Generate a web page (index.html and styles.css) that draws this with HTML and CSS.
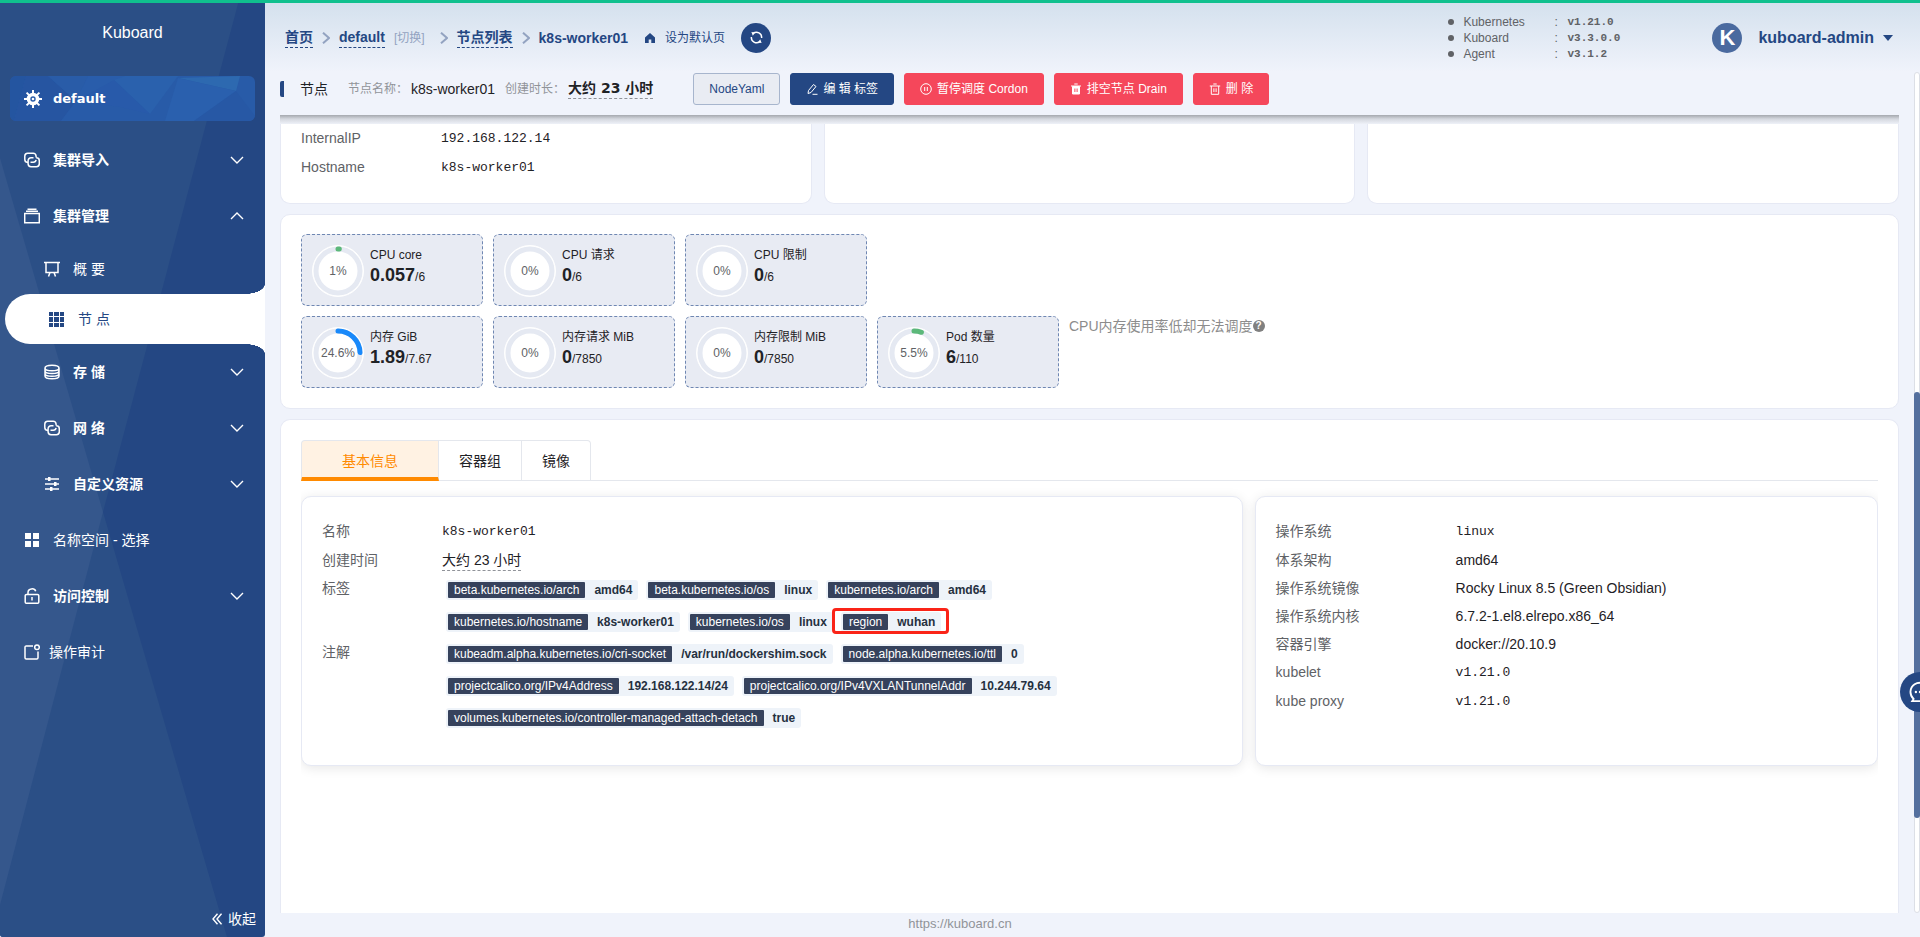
FILE: index.html
```html
<!DOCTYPE html>
<html lang="zh-CN">
<head>
<meta charset="utf-8">
<title>Kuboard</title>
<link rel="stylesheet" href="styles.css">
</head>
<body>
<svg class="defs" aria-hidden="true">
  <symbol id="i-link" viewBox="0 0 16 16"><path d="M4 10.5H3.6A2.9 2.9 0 0 1 .8 7.600V4.200A2.900 2.900 0 0 1 3.700 1.300H9.200A2.900 2.900 0 0 1 12.100 4.200V5.500M12.100 7.800A2.900 2.900 0 0 1 9.200 10.200H6.500M12.200 5.800H12.400A2.900 2.900 0 0 1 15.300 8.700V11.800A2.900 2.900 0 0 1 12.400 14.700H7A2.900 2.900 0 0 1 4.100 11.800V8.700A2.900 2.900 0 0 1 7 5.800H9.500"/></symbol>
  <symbol id="i-box" viewBox="0 0 16 16"><path d="M.7 5.500H15.300V14.700H.7ZM2 3.300H14M3.500 1.300H12.500"/></symbol>
  <symbol id="i-board" viewBox="0 0 16 16"><path d="M0 1.500H16M2 1.500V11.500H14V1.500M6 11.500L4.500 15.500M10 11.500L11.500 15.500"/></symbol>
  <symbol id="i-db" viewBox="0 0 16 16"><path d="M1 4C1 .3 15 .3 15 4S1 7.700 1 4ZM1 4V12C1 15.700 15 15.700 15 12V4M1 6.700C1 10.400 15 10.400 15 6.700M1 9.500C1 13.200 15 13.200 15 9.500"/></symbol>
  <symbol id="i-sliders" viewBox="0 0 16 16"><path d="M1 3H15M1 8H15M1 13H15"/><path class="solid" d="M4 1H6.500V5H4ZM10 6H12.500V10H10ZM6 11H8.500V15H6Z"/></symbol>
  <symbol id="i-lock" viewBox="0 0 16 16"><path d="M2.500 6.500H13.500A1.300 1.300 0 0 1 14.800 7.800V14A1.300 1.300 0 0 1 13.500 15.300H2.500A1.300 1.300 0 0 1 1.200 14V7.800A1.300 1.300 0 0 1 2.500 6.500ZM4 6.500V4.500C4 .2 10.500-.3 11.700 3.200M8 9V12.500"/></symbol>
  <symbol id="i-audit" viewBox="0 0 16 16"><path d="M9 2H2.300A1.200 1.200 0 0 0 1 3.200V13.700A1.200 1.200 0 0 0 2.200 14.900H12.800A1.200 1.200 0 0 0 14 13.700V7.500"/><circle cx="13" cy="3.200" r="2.300"/></symbol>
  <symbol id="i-down" viewBox="0 0 16 16"><path d="M2 5L8 11L14 5"/></symbol>
  <symbol id="i-up" viewBox="0 0 16 16"><path d="M2 11L8 5L14 11"/></symbol>
  <symbol id="i-sep" viewBox="0 0 8 12"><path d="M1 .7L7 6L1 11.300"/></symbol>
</svg>
<div class="app">
  <div class="progress"></div>
  <aside class="sidebar">
    <svg class="facets" viewBox="0 0 265 937" preserveAspectRatio="none" aria-hidden="true">
      <path fill="#2b4f86" d="M0 0H239L103 512L227 937H0Z"/>
      <path fill="#35578c" d="M0 158L103 512L0 905Z"/>
    </svg>
    <h1 class="brand">Kuboard</h1>
    <button class="cluster" type="button">
      <svg class="cluster-art" viewBox="0 0 245 45" preserveAspectRatio="none" aria-hidden="true">
        <path fill="#2455a0" d="M0 0H16L4 45H0Z"/>
        <path fill="#2655a1" d="M16 0H38L66 25L51 45H4Z"/>
        <path fill="#295ca8" d="M38 0H78L66 25Z"/>
        <path fill="#295dab" d="M78 0H115L66 25Z"/>
        <path fill="#2a61ad" d="M115 0H168L140 38L104 4Z"/>
        <path fill="#285aaa" d="M104 4L140 38L110 31L66 25Z"/>
        <path fill="#2d69b0" d="M168 2L230 0L226 15Z"/>
        <path fill="#2a60ae" d="M168 2L226 15L184 45H155Z"/>
        <path fill="#2758a5" d="M226 15L245 40V45H184Z"/>
      </svg>
      <svg class="gear" viewBox="0 0 18 18" aria-hidden="true"><path d="M9 0V18M0 9H18M2.600 2.600L15.400 15.400M15.400 2.600L2.600 15.400" stroke-width="2"/><circle class="gear-body" cx="9" cy="9" r="4.500" stroke-width="3.600"/><circle class="dot" cx="9" cy="9" r="1.300"/></svg>
      <span>default</span>
    </button>
    <nav class="menu">
      <a href="#" class="item group"><svg class="ico"><use href="#i-link"/></svg><span>集群导入</span><svg class="arrow"><use href="#i-down"/></svg></a>
      <a href="#" class="item group"><svg class="ico"><use href="#i-box"/></svg><span>集群管理</span><svg class="arrow"><use href="#i-up"/></svg></a>
      <a href="#" class="item sub leaf"><svg class="ico"><use href="#i-board"/></svg><span>概 要</span></a>
      <a href="#" class="item sub leaf active"><svg class="ico" viewBox="0 0 15 15"><path class="solid" d="M0 0H4V4H0ZM5 0H10V4H5ZM11 0H15V4H11ZM0 5H4V10H0ZM5 5H10V10H5ZM11 5H15V10H11ZM0 11H4V15H0ZM5 11H10V15H5ZM11 11H15V15H11Z"/></svg><span>节 点</span></a>
      <a href="#" class="item group sub"><svg class="ico"><use href="#i-db"/></svg><span>存 储</span><svg class="arrow"><use href="#i-down"/></svg></a>
      <a href="#" class="item group sub"><svg class="ico"><use href="#i-link"/></svg><span>网 络</span><svg class="arrow"><use href="#i-down"/></svg></a>
      <a href="#" class="item group sub"><svg class="ico"><use href="#i-sliders"/></svg><span>自定义资源</span><svg class="arrow"><use href="#i-down"/></svg></a>
      <a href="#" class="item"><svg class="ico" viewBox="0 0 16 16"><path class="solid" d="M1 1H7V7H1ZM9 1H15V7H9ZM1 9H7V15H1ZM9 9H15V15H9Z"/></svg><span>名称空间 - 选择</span></a>
      <a href="#" class="item group"><svg class="ico"><use href="#i-lock"/></svg><span>访问控制</span><svg class="arrow"><use href="#i-down"/></svg></a>
      <a href="#" class="item tight"><svg class="ico"><use href="#i-audit"/></svg><span>操作审计</span></a>
    </nav>
    <button class="collapse" type="button"><svg viewBox="0 0 10 12" aria-hidden="true"><path d="M5.500 .7L1 6L5.500 11.300M9.500 .7L5 6L9.500 11.300"/></svg>收起</button>
  </aside>

  <div class="main">
    <header class="topbar">
      <nav class="crumbs">
        <a href="#">首页</a>
        <svg class="sep"><use href="#i-sep"/></svg>
        <a href="#">default</a>
        <a href="#" class="switch">[切换]</a>
        <svg class="sep"><use href="#i-sep"/></svg>
        <a href="#">节点列表</a>
        <svg class="sep"><use href="#i-sep"/></svg>
        <b>k8s-worker01</b>
      </nav>
      <a href="#" class="set-home"><svg viewBox="0 0 10 10" aria-hidden="true"><path d="M5 0L10 4.500V10H6.300V6.500H3.700V10H0V4.500Z"/></svg>设为默认页</a>
      <button class="refresh" type="button" aria-label="刷新"><svg viewBox="0 0 14 14" aria-hidden="true"><path d="M3.500 2.500A5.600 5.600 0 0 1 12.500 7.500M1.500 6.500A5.600 5.600 0 0 0 10.500 11.500"/><path class="solid" d="M1.500 1L5.500 1.500L3 5ZM12.500 13L8.500 12.500L11 9Z"/></svg></button>
      <ul class="versions">
        <li><span>Kubernetes</span><i>:</i><code>v1.21.0</code></li>
        <li><span>Kuboard</span><i>:</i><code>v3.3.0.0</code></li>
        <li><span>Agent</span><i>:</i><code>v3.1.2</code></li>
      </ul>
      <button class="user" type="button"><span class="avatar">K</span>kuboard-admin<span class="caret"></span></button>
    </header>

    <div class="work">
      <div class="page">
        <div class="titlebar">
          <h2>节点</h2>
          <span class="meta">节点名称：</span><span class="val">k8s-worker01</span>
          <span class="meta">创建时长：</span><span class="age">大约 23 小时</span>
          <div class="actions">
            <button class="btn plain" type="button">NodeYaml</button>
            <button class="btn primary" type="button"><svg viewBox="0 0 12 12"><path d="M2.500 7.500L7.500 1.500L10 3.500L5 9.500L2 10.500ZM6.500 11.300H11.500"/></svg>编 辑 标签</button>
            <button class="btn danger" type="button"><svg viewBox="0 0 12 12"><path d="M6 .7A5.300 5.300 0 1 0 6 11.300A5.300 5.300 0 1 0 6 .7ZM4.700 4V8M7.300 4V8"/></svg>暂停调度 Cordon</button>
            <button class="btn danger" type="button"><svg viewBox="0 0 12 12"><path d="M1 3H11M4.300 1H7.700"/><path fill="currentColor" d="M2.500 3.500H9.500V11H2.500Z"/><path stroke="#f5475b" d="M4.900 5.500V9M7.100 5.500V9"/></svg>排空节点 Drain</button>
            <button class="btn danger" type="button"><svg viewBox="0 0 12 12"><path d="M.8 3H11.200M4.300 1H7.700M2.300 3V11.300H9.700V3M4.900 5.300V9M7.100 5.300V9"/></svg>删 除</button>
          </div>
        </div>
        <div class="fade"></div>

        <section class="trio">
          <div class="card cut">
            <dl class="kv"><dt>InternalIP</dt><dd class="mono">192.168.122.14</dd><dt>Hostname</dt><dd class="mono">k8s-worker01</dd></dl>
          </div>
          <div class="card cut"></div>
          <div class="card cut"></div>
        </section>

        <section class="card stats">
          <div class="statrow">
            <div class="stat"><div class="ring"><svg viewBox="0 0 50 50"><circle class="track" cx="25" cy="25" r="22"/><circle class="bar green" cx="25" cy="25" r="22" pathLength="100" stroke-dasharray="1 100"/></svg><span>1%</span></div><div><p>CPU core</p><p><b>0.057</b>/6</p></div></div>
            <div class="stat"><div class="ring"><svg viewBox="0 0 50 50"><circle class="track" cx="25" cy="25" r="22"/></svg><span>0%</span></div><div><p>CPU 请求</p><p><b>0</b>/6</p></div></div>
            <div class="stat"><div class="ring"><svg viewBox="0 0 50 50"><circle class="track" cx="25" cy="25" r="22"/></svg><span>0%</span></div><div><p>CPU 限制</p><p><b>0</b>/6</p></div></div>
          </div>
          <div class="statrow">
            <div class="stat"><div class="ring"><svg viewBox="0 0 50 50"><circle class="track" cx="25" cy="25" r="22"/><circle class="bar blue" cx="25" cy="25" r="22" pathLength="100" stroke-dasharray="24.6 100"/></svg><span>24.6%</span></div><div><p>内存 GiB</p><p><b>1.89</b>/7.67</p></div></div>
            <div class="stat"><div class="ring"><svg viewBox="0 0 50 50"><circle class="track" cx="25" cy="25" r="22"/></svg><span>0%</span></div><div><p>内存请求 MiB</p><p><b>0</b>/7850</p></div></div>
            <div class="stat"><div class="ring"><svg viewBox="0 0 50 50"><circle class="track" cx="25" cy="25" r="22"/></svg><span>0%</span></div><div><p>内存限制 MiB</p><p><b>0</b>/7850</p></div></div>
            <div class="stat"><div class="ring"><svg viewBox="0 0 50 50"><circle class="track" cx="25" cy="25" r="22"/><circle class="bar green" cx="25" cy="25" r="22" pathLength="100" stroke-dasharray="5.5 100"/></svg><span>5.5%</span></div><div><p>Pod 数量</p><p><b>6</b>/110</p></div></div>
            <div class="hint">CPU内存使用率低却无法调度<span class="q">?</span></div>
          </div>
        </section>

        <section class="card detail">
          <div class="tabs" role="tablist">
            <button class="tab on" type="button" role="tab" aria-selected="true">基本信息</button>
            <button class="tab" type="button" role="tab">容器组</button>
            <button class="tab" type="button" role="tab">镜像</button>
          </div>
          <div class="panels">
            <div class="panel">
              <dl class="kv left">
                <dt>名称</dt><dd class="mono">k8s-worker01</dd>
                <dt>创建时间</dt><dd><span class="dashed">大约 23 小时</span></dd>
                <dt>标签</dt>
                <dd class="tags">
                  <span class="tag"><span>beta.kubernetes.io/arch</span><b>amd64</b></span>
                  <span class="tag"><span>beta.kubernetes.io/os</span><b>linux</b></span>
                  <span class="tag"><span>kubernetes.io/arch</span><b>amd64</b></span>
                  <span class="tag"><span>kubernetes.io/hostname</span><b>k8s-worker01</b></span>
                  <span class="tag"><span>kubernetes.io/os</span><b>linux</b></span>
                  <span class="tag marked"><span>region</span><b>wuhan</b></span>
                </dd>
                <dt>注解</dt>
                <dd class="tags">
                  <span class="tag"><span>kubeadm.alpha.kubernetes.io/cri-socket</span><b>/var/run/dockershim.sock</b></span>
                  <span class="tag"><span>node.alpha.kubernetes.io/ttl</span><b>0</b></span>
                  <span class="tag"><span>projectcalico.org/IPv4Address</span><b>192.168.122.14/24</b></span>
                  <span class="tag"><span>projectcalico.org/IPv4VXLANTunnelAddr</span><b>10.244.79.64</b></span>
                  <span class="tag"><span>volumes.kubernetes.io/controller-managed-attach-detach</span><b>true</b></span>
                </dd>
              </dl>
            </div>
            <div class="panel">
              <dl class="kv right">
                <dt>操作系统</dt><dd class="mono">linux</dd>
                <dt>体系架构</dt><dd>amd64</dd>
                <dt>操作系统镜像</dt><dd>Rocky Linux 8.5 (Green Obsidian)</dd>
                <dt>操作系统内核</dt><dd>6.7.2-1.el8.elrepo.x86_64</dd>
                <dt>容器引擎</dt><dd>docker://20.10.9</dd>
                <dt>kubelet</dt><dd class="mono">v1.21.0</dd>
                <dt>kube proxy</dt><dd class="mono">v1.21.0</dd>
              </dl>
            </div>
          </div>
        </section>
      </div>
      <div class="scroll"><div class="thumb"></div></div>
    </div>
  </div>
  <footer class="foot"><a href="#">https://kuboard.cn</a></footer>
  <button class="chat" type="button" aria-label="反馈"><svg viewBox="0 0 24 24" aria-hidden="true"><path d="M5 19.500A10 10 0 1 1 12 22H3.500Z"/><circle class="dot" cx="7.500" cy="12" r="1.300"/><circle class="dot" cx="12" cy="12" r="1.300"/><circle class="dot" cx="16.500" cy="12" r="1.300"/></svg></button>
</div>
</body>
</html>
```

FILE: styles.css
```css
:root {
  --navy: #244783;
  --bg: #f0f3fb;
  --line: #e6e9f4;
  --text: #1f2226;
  --muted: #606266;
  --soft: #909399;
}

* { box-sizing: border-box; }

body {
  margin: 0;
  background: var(--bg);
  color: var(--text);
  font: 14px/20px "Liberation Sans", "Noto Sans CJK SC", sans-serif;
}

h1, h2, p, ul, dl, dd { margin: 0; padding: 0; }
a { color: inherit; text-decoration: none; }
button { font: inherit; color: inherit; border: 0; background: none; padding: 0; cursor: pointer; }
svg { flex: none; fill: none; stroke: currentColor; }
.solid, .dot { fill: currentColor; stroke: none; }
.defs { position: absolute; width: 0; height: 0; }
.mono, code { font-family: "Liberation Mono", "Noto Sans CJK SC", monospace; }

.app {
  position: relative;
  display: grid;
  grid-template: minmax(0, 1fr) 24px / 265px minmax(0, 1fr);
  height: 100vh;
  overflow: hidden;
}

.progress {
  position: absolute;
  inset: 0 0 auto;
  height: 3px;
  background: #10c08e;
  z-index: 3;
}

/* Sidebar */
.sidebar {
  position: relative;
  z-index: 1;
  grid-area: 1 / 1 / 3 / 2;
  display: flex;
  flex-direction: column;
  background: var(--navy);
  color: #fff;
  overflow: hidden;
  border-radius: 0 0 3px 3px;
}
.facets { position: absolute; width: 100%; height: 100%; stroke: none; z-index: -1; }
.brand { margin: 23px 0 33px; font-size: 16px; font-weight: 400; line-height: 20px; text-align: center; }

.cluster {
  position: relative;
  z-index: 0;
  display: flex;
  align-items: center;
  gap: 11px;
  height: 45px;
  margin: 0 10px 11px;
  padding-left: 14px;
  border-radius: 6px;
  overflow: hidden;
  background: #285ba8;
  font-family: "DejaVu Sans", sans-serif;
  font-size: 13px;
  font-weight: 700;
}
.cluster-art { position: absolute; inset: 0; width: 100%; height: 100%; stroke: none; z-index: -1; }
.gear { width: 18px; height: 18px; }
.gear-body { fill: #285ba8; }

.menu { flex: 1; }
.item { position: relative; display: flex; align-items: center; gap: 13px; height: 56px; padding: 0 20px 0 24px; }
.item.group { font-weight: 700; }
.item.sub { padding-left: 44px; }
.item.leaf { height: 50px; }
.item.tight { gap: 9px; }
.ico { width: 16px; height: 16px; stroke-width: 1.5; }
.arrow { width: 16px; height: 16px; margin-left: auto; stroke-width: 1.4; }
.item.active {
  margin-left: 5px;
  gap: 14px;
  background: #fff;
  border-radius: 25px 0 0 25px;
  color: var(--navy);
}
.active .ico { width: 15px; height: 15px; }
.active::before, .active::after {
  content: "";
  position: absolute;
  right: 0;
  width: 20px;
  height: 10px;
}
.active::before { bottom: 100%; background: radial-gradient(ellipse 20px 10px at 0 0, transparent 98%, #fff); }
.active::after { top: 100%; background: radial-gradient(ellipse 20px 10px at 0 100%, transparent 98%, #fff); }
.collapse { display: flex; align-items: center; align-self: flex-end; gap: 6px; margin: 0 9px 8px; }
.collapse svg { width: 10px; height: 12px; stroke-width: 1.4; }

/* Top bar */
.main { display: flex; flex-direction: column; min-height: 0; }
.topbar {
  display: flex;
  align-items: center;
  flex: none;
  height: 72px;
  padding: 3px 27px 0 20px;
  background: linear-gradient(#d3e0ed, var(--bg));
  color: var(--navy);
}
.crumbs { display: flex; align-items: center; gap: 9px; font-weight: 700; }
.crumbs a { border-bottom: 1px dashed var(--navy); line-height: 20px; }
.crumbs .switch { border: 0; font-size: 12px; font-weight: 400; color: #93a3c1; margin-right: 6px; }
.sep { width: 8px; height: 12px; color: #93a3c1; stroke-width: 2; }
.set-home { display: flex; align-items: center; gap: 10px; margin-left: 17px; font-size: 12px; }
.set-home svg { width: 10px; height: 10px; fill: currentColor; stroke: none; }
.refresh {
  display: grid;
  place-items: center;
  width: 30px;
  height: 30px;
  margin-left: 16px;
  border-radius: 50%;
  background: var(--navy);
  color: #fff;
}
.refresh svg { width: 13px; height: 13px; stroke-width: 1.6; }
.versions { margin-left: auto; margin-right: 77px; list-style: none; font-size: 12px; line-height: 16px; color: var(--muted); }
.versions li { display: grid; grid-template-columns: 15px 91px 13px 68px; align-items: center; }
.versions li::before { content: ""; width: 6px; height: 6px; border-radius: 50%; background: var(--muted); }
.versions i { font-style: normal; }
.versions code { font-size: 11px; font-weight: 700; }
.user { display: flex; align-items: center; font-size: 16px; font-weight: 700; }
.avatar { width: 30px; margin-right: 16px; border-radius: 50%; background: #4a6a9f; color: #fff; font-size: 22px; line-height: 30px; text-align: center; }
.caret { margin-left: 9px; border: 5px solid transparent; border-top: 6px solid; border-bottom: 0; }

/* Work area */
.work { display: flex; flex: 1; min-height: 0; }
.page { display: flex; flex-direction: column; flex: 1; min-width: 0; padding: 0 15px; overflow: hidden; }
.titlebar { display: flex; align-items: center; flex: none; height: 43px; padding-bottom: 10px; }
.titlebar h2 { border-left: 4px solid var(--navy); border-radius: 2px; padding-left: 16px; margin-right: 20px; font-size: 14px; font-weight: 400; line-height: 16px; }
.meta { margin-right: 3px; font-size: 12px; color: var(--soft); }
.val { margin-right: 10px; }
.age { border-bottom: 1px dashed var(--soft); font-family: "DejaVu Sans", "Noto Sans CJK SC", sans-serif; font-weight: 700; }
.actions { display: flex; gap: 10px; margin-left: 40px; }
.btn { display: flex; align-items: center; gap: 5px; height: 32px; padding: 0 15px; border: 1px solid; border-radius: 3px; font-size: 12px; white-space: nowrap; }
.btn svg { width: 12px; height: 12px; }
.plain { background: #e9ecf3; border-color: #a7b5cd; color: var(--navy); }
.primary { background: var(--navy); border-color: var(--navy); color: #fff; }
.danger { background: #f5475b; border-color: #f5475b; color: #fff; }
.fade { flex: none; height: 9px; background: linear-gradient(#a5a8ae, #d5d8df 45%, #eef1f8); }

.card { background: #fff; border: 1px solid var(--line); border-radius: 10px; }
.trio { display: grid; grid-template-columns: repeat(3, minmax(0, 1fr)); gap: 12px; flex: none; margin-bottom: 10px; }
.cut { border-top: 0; border-radius: 0 0 10px 10px; padding: 0 20px 21px; }

.kv { display: grid; grid-template-columns: 140px minmax(0, 1fr); grid-auto-rows: minmax(28px, auto); line-height: 28px; }
.kv dt { color: var(--muted); }
.kv .mono { font-size: 13px; line-height: 29px; }
.kv.left { grid-template-columns: 120px minmax(0, 1fr); }
.kv.right { grid-template-columns: 180px minmax(0, 1fr); }
.dashed { display: inline-block; border-bottom: 1px dashed var(--soft); line-height: 20px; }

.stats { display: grid; gap: 10px; flex: none; padding: 19px 20px 20px; margin-bottom: 10px; }
.statrow { display: flex; gap: 10px; }
.stat { display: flex; gap: 6px; width: 182px; height: 72px; padding: 10px; border: 1px dashed #6f87b2; border-radius: 6px; background: #e8ebf3; font-size: 12px; }
.stat b { font-size: 18px; }
.ring { position: relative; width: 52px; height: 52px; border: 1px solid #fff; border-radius: 50%; background: #fff; display: grid; place-items: center; color: var(--muted); }
.ring svg { position: absolute; inset: 0; width: 50px; height: 50px; transform: rotate(-90deg); }
.ring span { position: relative; }
.track { stroke: #e5e9f2; stroke-width: 5; }
.bar { stroke-width: 5; stroke-linecap: round; }
.green { stroke: #5cb87a; }
.blue { stroke: #1989fa; }
.hint { color: #8c8c8c; }
.q { display: inline-block; width: 12px; height: 12px; border-radius: 50%; background: #808080; color: #fff; font-size: 10px; font-weight: 700; line-height: 12px; text-align: center; vertical-align: 2px; }

.detail { flex: 1; min-height: 0; padding: 20px 20px 0; border-bottom: 0; border-radius: 10px 10px 0 0; }
.tabs { display: flex; height: 41px; border-bottom: 1px solid #e4e7ed; }
.tab { height: 41px; padding: 0 20px; border: solid #e4e7ed; border-width: 1px 1px 1px 0; }
.tab:first-child { border-left-width: 1px; border-radius: 4px 0 0 0; }
.tab:last-child { border-radius: 0 4px 0 0; }
.tab.on { padding: 3px 40px 0; border-bottom: 4px solid #ff8a00; background: #fff2e3; color: #ff8a00; }
.panels { display: grid; grid-template-columns: 941fr 623fr; gap: 12px; padding: 15px 0 24px; overflow: hidden; }
.panel { padding: 20px 20px 31px; border: 1px solid var(--line); border-radius: 10px; background: #fff; box-shadow: 0 2px 12px rgba(0, 0, 0, .1); }

.tags { display: flex; flex-wrap: wrap; gap: 12px 8px; padding: 6px 4px; font-size: 12px; line-height: 16px; }
.tag { position: relative; display: flex; padding: 2px; border-radius: 3px; background: #eef3f9; }
.tag span { padding: 0 6px; border-radius: 1px; background: #36425c; color: #fff; }
.tag b { padding: 0 4px 0 9px; color: #25303f; }
.marked::after { content: ""; position: absolute; inset: -4px -8px -2px -9px; border: 3px solid #fa2418; border-radius: 4px; }

.scroll { width: 6px; border: 1px solid #dcdfe6; border-radius: 4px; background: #fff; padding-top: 319px; }
.thumb { height: 426px; margin: 0 -1px; border-radius: 3px; background: #546f9e; }

.foot { grid-area: 2 / 1 / 3 / 3; text-align: center; font-size: 13px; line-height: 22px; color: var(--soft); }
.chat {
  position: absolute;
  right: -20px;
  bottom: 225px;
  display: grid;
  place-items: center;
  width: 40px;
  height: 40px;
  border-radius: 50%;
  background: var(--navy);
  color: #fff;
}
.chat svg { width: 22px; height: 22px; stroke-width: 2; }
```
